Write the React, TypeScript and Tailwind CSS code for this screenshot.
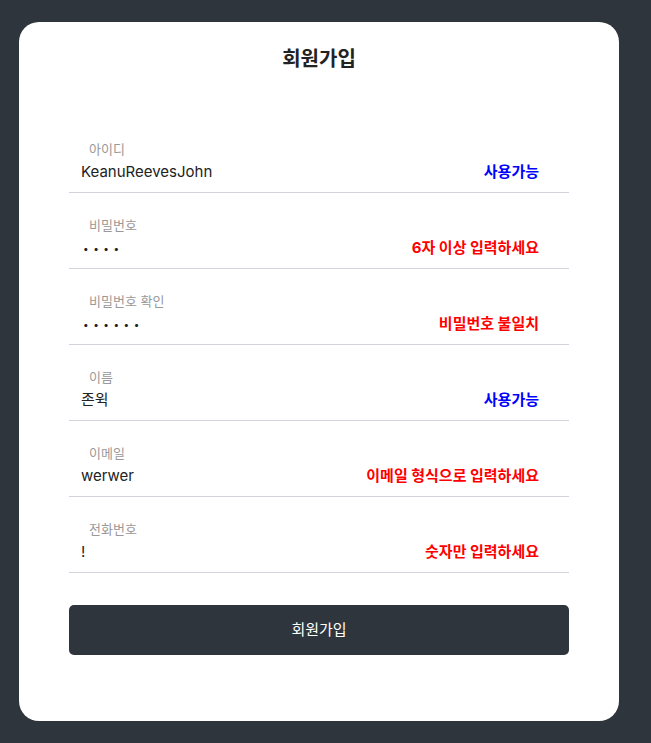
import React from "react";

type Field = {
  label: string;
  value: string;
  status: string;
  ok: boolean;
  secret?: boolean;
};

const fields: Field[] = [
  { label: "아이디", value: "KeanuReevesJohn", status: "사용가능", ok: true },
  { label: "비밀번호", value: "••••", status: "6자 이상 입력하세요", ok: false, secret: true },
  { label: "비밀번호 확인", value: "••••••", status: "비밀번호 불일치", ok: false, secret: true },
  { label: "이름", value: "존윅", status: "사용가능", ok: true },
  { label: "이메일", value: "werwer", status: "이메일 형식으로 입력하세요", ok: false },
  { label: "전화번호", value: "!", status: "숫자만 입력하세요", ok: false },
];

const font = "font-['Inter','Noto_Sans_CJK_KR',sans-serif]";

export default function App() {
  return (
    <div className={`min-h-[743px] bg-[#2e353d] pt-[22px] pl-[19px] ${font}`}>
      <div className="w-[600px] h-[699px] bg-white rounded-[20px] px-[50px] pt-[23px]">
        <h1 className="text-center text-[20px] leading-[28px] font-bold text-[#222]">회원가입</h1>

        <div className="mt-[44px]">
          {fields.map((f) => (
            <div key={f.label} className="border-b border-[#d1d5db] pt-[23px] pb-[9px]">
              <div className="pl-[20px] text-[13px] leading-[18px] text-[#999]">{f.label}</div>
              <div className="mt-[3px] flex items-center justify-between pl-[12px] pr-[30px] h-[22px]">
                {f.secret ? (
                  <span className="pl-[2px] text-[10px] tracking-[4.5px] text-[#222]">{f.value}</span>
                ) : (
                  <span className="text-[15px] text-[#222]">{f.value}</span>
                )}
                <span
                  className={`text-[15px] font-bold ${f.ok ? "text-[#0000ff]" : "text-[#ff0000]"}`}
                >
                  {f.status}
                </span>
              </div>
            </div>
          ))}
        </div>

        <button className="mt-[32px] w-full h-[50px] rounded-[5px] bg-[#2e353d] text-white text-[15px]">
          회원가입
        </button>
      </div>
    </div>
  );
}
